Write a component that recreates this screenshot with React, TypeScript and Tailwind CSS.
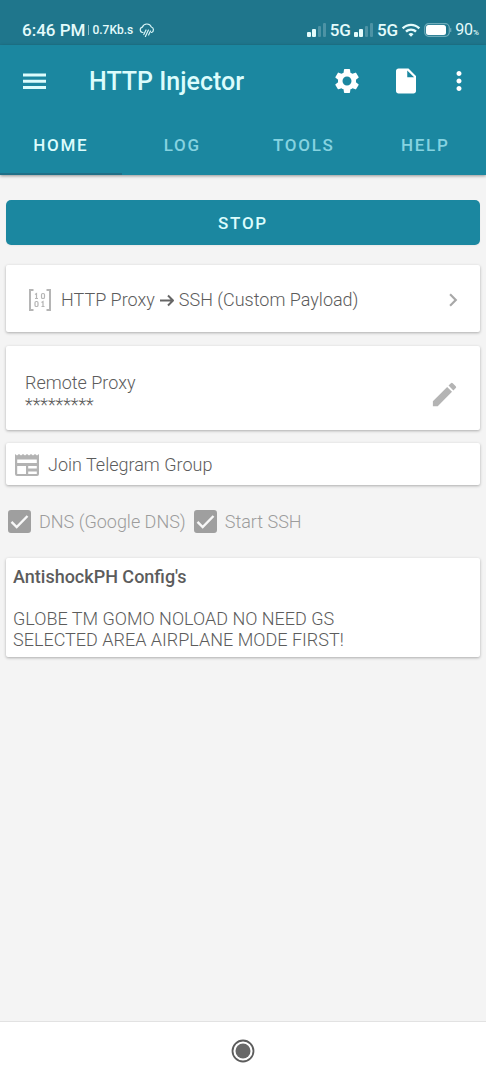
import type { ReactNode } from 'react';
import { MdChevronRight, MdEdit, MdInsertDriveFile, MdMoreVert, MdSettings, MdWifi } from 'react-icons/md';

function SignalIcon() {
  return (
    <svg viewBox="0 0 20 14" className="h-[14px] w-5" aria-hidden="true">
      <rect x="0" y="9" width="4" height="5" rx="1" fill="#e4fbfb" />
      <rect x="5" y="6" width="4" height="8" rx="1" fill="#e4fbfb" />
      <rect x="11" y="3" width="3" height="11" rx="1" fill="#4d93a5" />
      <rect x="16" y="0" width="3" height="14" rx="1" fill="#4d93a5" />
    </svg>
  );
}

function RainIcon() {
  return (
    <svg
      viewBox="0 0 16 15"
      className="h-[15px] w-4"
      fill="none"
      stroke="#d8f5f7"
      strokeWidth="1.2"
      strokeLinecap="round"
      aria-hidden="true"
    >
      <path d="M4 9.500H3.600A2.700 2.700 0 0 1 3.300 4.200A4.900 4.900 0 0 1 12.400 4A2.900 2.900 0 0 1 12.500 9.500" />
      <path d="M7 7L4.800 11.500M9.400 7L6.400 13.500M11.500 8L9.600 12" />
    </svg>
  );
}

function BatteryIcon() {
  return (
    <svg viewBox="0 0 28 14" className="h-[14px] w-7" aria-hidden="true">
      <rect x="0.700" y="0.700" width="24.600" height="12.600" rx="4" fill="none" stroke="#6facba" strokeWidth="1.200" />
      <rect x="2" y="2" width="20" height="10" rx="2.500" fill="#fff" />
      <path d="M26.700 5.500v3" stroke="#6facba" strokeWidth="1.200" strokeLinecap="round" />
    </svg>
  );
}

function MenuIcon() {
  return (
    <svg viewBox="0 0 30 30" className="size-[30px]" fill="#dcfcfc" aria-hidden="true">
      <path d="M3 7.500h23v3H3zM3 13.800h23v3H3zM3 20h23v3H3z" />
    </svg>
  );
}

function ArrowIcon() {
  return (
    <svg
      viewBox="0 0 16 16"
      className="size-4"
      fill="none"
      stroke="#666"
      strokeWidth="2"
      strokeLinejoin="round"
      role="img"
      aria-label="to"
    >
      <path d="M1 8.500h13M9 3.500l5 5l-5 5" />
    </svg>
  );
}

function PayloadIcon() {
  return (
    <svg viewBox="0 0 24 24" className="size-6" fill="none" stroke="#b5b5b5" aria-hidden="true">
      <path d="M5.500 2H2v20h3.500M18.500 2H22v20h-3.500" strokeWidth="2" />
      <path d="M7 6.500l1.500-1v5M7 10.500h3" strokeWidth="1.200" />
      <rect x="13.500" y="5.500" width="3" height="5" rx="1.300" strokeWidth="1.200" />
      <rect x="7" y="13.500" width="3" height="5" rx="1.300" strokeWidth="1.200" />
      <path d="M13.500 14.500l1.500-1v5M13.500 18.500h3" strokeWidth="1.200" />
    </svg>
  );
}

function NewspaperIcon() {
  return (
    <svg viewBox="0 0 26 24" className="h-6 w-[26px]" aria-hidden="true">
      <path
        fill="#b3b3b3"
        fillRule="evenodd"
        d="M1 1l2 1.500L5 1l2 1.500L9 1l2 1.500L13 1l2 1.500L17 1l2 1.500L21 1l2 1.500L25 1v20a2 2 0 0 1-2 2H3a2 2 0 0 1-2-2zM3.200 6.500v3.500h19.600V6.500zM3.200 13v8h8.800v-8zM14.200 13v2.500h8.600V13zM14.200 18.500V21h8.600v-2.500z"
      />
    </svg>
  );
}

function Card({ className, children }: { className: string; children: ReactNode }) {
  return <section className={`rounded-xs bg-white shadow-[0_1px_3px_rgba(0,0,0,0.3)] ${className}`}>{children}</section>;
}

function CheckOption({ id, label }: { id: string; label: string }) {
  return (
    <div className="flex items-center gap-2">
      <span className="grid size-[23px] shrink-0">
        <input
          id={id}
          type="checkbox"
          defaultChecked
          disabled
          className="peer col-start-1 row-start-1 size-full appearance-none rounded-[3px] border-2 border-[#9f9f9f] checked:bg-[#9f9f9f]"
        />
        <svg
          viewBox="0 0 23 23"
          className="pointer-events-none invisible col-start-1 row-start-1 peer-checked:visible"
          fill="none"
          stroke="#f8f8f8"
          strokeWidth="2.400"
          aria-hidden="true"
        >
          <path d="M3.500 11.800L8.700 17L19.500 6" />
        </svg>
      </span>
      <label htmlFor={id} className="text-lg leading-5 font-light text-[#9c9c9c]">
        {label}
      </label>
    </div>
  );
}

const tabs = ['HOME', 'LOG', 'TOOLS', 'HELP'];

export default function App() {
  return (
    <div className="flex min-h-screen flex-col bg-[#f4f4f4] font-['Roboto',sans-serif] text-[#5c5c5c]">
      <div className="flex h-[45px] items-end justify-between bg-[#1f768c] pr-[7px] pb-1 pl-[22px] text-[#e4fbfb]">
        <div className="flex items-center gap-[3px]">
          <span className="text-[17px] leading-[22px] font-medium">6:46 PM</span>
          <span className="h-[10px] w-px bg-[#8fc0ca]" />
          <span className="text-xs font-medium">0.7Kb.s</span>
          <span className="pl-[3px]">
            <RainIcon />
          </span>
        </div>
        <div className="flex items-center gap-[3px]">
          <SignalIcon />
          <span className="text-[17px] leading-[22px] font-medium">5G</span>
          <SignalIcon />
          <span className="text-[17px] leading-[22px] font-medium">5G</span>
          <MdWifi className="size-5" />
          <BatteryIcon />
          <span className="flex items-baseline text-base leading-[22px]">
            90<span className="text-[8px] leading-none font-medium">%</span>
          </span>
        </div>
      </div>

      <header className="bg-[#1b87a0] shadow-[0_1px_3px_rgba(0,0,0,0.4)]">
        <div className="flex h-[72px] items-center pr-3 pl-5 text-white">
          <button type="button" aria-label="Open menu">
            <MenuIcon />
          </button>
          <h1 className="grow pt-[2px] pl-[39px] text-[25px] leading-8 font-medium text-[#dcfcfc]">HTTP Injector</h1>
          <div className="flex items-center gap-[29px]">
            <button type="button" aria-label="Settings">
              <MdSettings className="size-[30px]" />
            </button>
            <button type="button" aria-label="Config file">
              <MdInsertDriveFile className="size-[30px]" />
            </button>
            <button type="button" aria-label="More options" className="-ml-[6px]">
              <MdMoreVert className="size-[30px]" />
            </button>
          </div>
        </div>
        <nav role="tablist" className="grid h-[58px] grid-cols-4">
          {tabs.map((tab, index) => (
            <button
              key={tab}
              type="button"
              role="tab"
              aria-selected={index === 0}
              className="border-b-2 border-transparent pt-[2px] text-[17px] font-medium tracking-widest text-[#86d3e0] aria-selected:border-[#1f6f87] aria-selected:text-[#dcfcfc]"
            >
              {tab}
            </button>
          ))}
        </nav>
      </header>

      <main className="flex grow flex-col px-[6px] pt-[25px]">
        <button
          type="button"
          className="h-[45px] rounded-[5px] bg-[#1b87a0] pt-[2px] text-[17px] font-medium tracking-widest text-[#dcfcfc] shadow-xs"
        >
          STOP
        </button>

        <Card className="mt-5">
          <button type="button" className="flex h-[67px] w-full items-center pt-[2px] pr-[14px] pl-[22px] text-lg font-light">
            <PayloadIcon />
            <span className="flex grow items-center gap-1 pl-[9px]">
              HTTP Proxy <ArrowIcon /> SSH (Custom Payload)
            </span>
            <MdChevronRight className="size-[26px] text-[#a8a8a8]" />
          </button>
        </Card>

        <Card className="mt-[14px] flex h-[84px] items-center justify-between pr-5 pl-[19px]">
          <div className="pt-[10px]">
            <h2 className="text-lg leading-6 font-light">Remote Proxy</h2>
            <p className="text-lg leading-5 font-light">*********</p>
          </div>
          <button type="button" aria-label="Edit remote proxy" className="pt-3">
            <MdEdit className="size-[31px] text-[#b4b4b4]" />
          </button>
        </Card>

        <Card className="mt-[13px]">
          <a href="#telegram" className="flex h-[42px] items-center gap-2 pt-[2px] pl-2 text-lg font-light">
            <NewspaperIcon />
            Join Telegram Group
          </a>
        </Card>

        <div className="mt-[25px] flex items-center gap-2 pl-[2px]">
          <CheckOption id="dns" label="DNS (Google DNS)" />
          <CheckOption id="ssh" label="Start SSH" />
        </div>

        <Card className="mt-[25px] px-[7px] pt-2 pb-[7px] text-lg leading-[21px]">
          <h2 className="font-medium">AntishockPH Config's</h2>
          <p className="pt-[21px] font-light">
            GLOBE TM GOMO NOLOAD NO NEED GS
            <br />
            SELECTED AREA AIRPLANE MODE FIRST!
          </p>
        </Card>
      </main>

      <footer className="flex h-[59px] items-center justify-center border-t border-[#e2e2e2] bg-white">
        <button type="button" aria-label="Home">
          <svg viewBox="0 0 24 24" className="size-6" aria-hidden="true">
            <circle cx="12" cy="12" r="10.500" fill="none" stroke="#5c5c5c" strokeWidth="1.800" />
            <circle cx="12" cy="12" r="7.500" fill="#686868" />
          </svg>
        </button>
      </footer>
    </div>
  );
}
